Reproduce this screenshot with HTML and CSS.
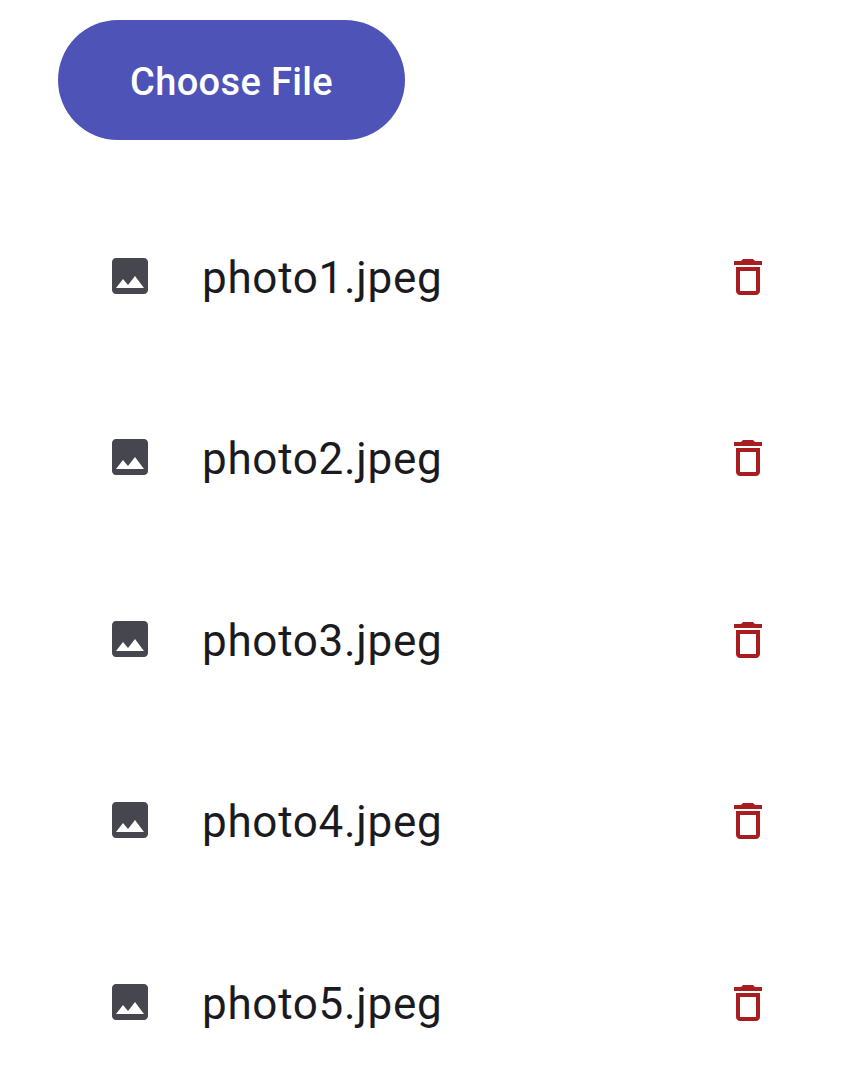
FILE: index.html
```html
<!DOCTYPE html>
<html lang="en">
<head>
<meta charset="utf-8">
<title>Choose File</title>
<link rel="stylesheet" href="styles.css">
</head>
<body>
<svg class="sprite" aria-hidden="true">
  <symbol id="image" viewBox="0 0 24 24"><path d="M21 19V5c0-1.1-.9-2-2-2H5c-1.1 0-2 .9-2 2v14c0 1.1.9 2 2 2h14c1.1 0 2-.9 2-2zM8.5 13.5l2.5 3.01L14.5 12l4.5 6H5l3.5-4.5z"/></symbol>
  <symbol id="trash" viewBox="0 0 24 24"><path d="M6 19c0 1.1.9 2 2 2h8c1.1 0 2-.9 2-2V7H6v12zM8 9h8v10H8V9zm7.5-5l-1-1h-5l-1 1H5v2h14V4h-3.5z"/></symbol>
</svg>
<main class="page">
  <button class="choose">Choose File</button>
  <ul class="files">
    <li class="file"><svg class="icon"><use href="#image"/></svg><span class="name">photo1.jpeg</span><svg class="icon delete"><use href="#trash"/></svg></li>
    <li class="file"><svg class="icon"><use href="#image"/></svg><span class="name">photo2.jpeg</span><svg class="icon delete"><use href="#trash"/></svg></li>
    <li class="file"><svg class="icon"><use href="#image"/></svg><span class="name">photo3.jpeg</span><svg class="icon delete"><use href="#trash"/></svg></li>
    <li class="file"><svg class="icon"><use href="#image"/></svg><span class="name">photo4.jpeg</span><svg class="icon delete"><use href="#trash"/></svg></li>
    <li class="file"><svg class="icon"><use href="#image"/></svg><span class="name">photo5.jpeg</span><svg class="icon delete"><use href="#trash"/></svg></li>
  </ul>
</main>
</body>
</html>
```
FILE: styles.css
```css
body {
  margin: 0;
  background: #fff;
  font-family: Roboto, sans-serif;
  overflow: hidden;
}
.sprite { display: none; }
.page { padding: 20px 58px 0; }
.choose {
  display: block;
  width: 347px;
  height: 120px;
  padding: 3px 0 0;
  border: 0;
  border-radius: 60px;
  background: #4d53b7;
  color: #fff;
  font: 500 38px/1 Roboto, sans-serif;
  letter-spacing: 0.35px;
}
.files {
  margin: 0;
  padding: 45.2px 20px 0 48px;
  list-style: none;
}
.file {
  display: flex;
  align-items: center;
  height: 181.5px;
}
.icon {
  flex: none;
  width: 48px;
  height: 48px;
  fill: #46464f;
}
.delete {
  margin: 2px 2px 0 0;
  fill: #a81e20;
}
.name {
  flex: 1;
  padding: 3.2px 0 0 48px;
  color: #1b1b1f;
  font-size: 44px;
  line-height: 56px;
  letter-spacing: 0.7px;
}
```
